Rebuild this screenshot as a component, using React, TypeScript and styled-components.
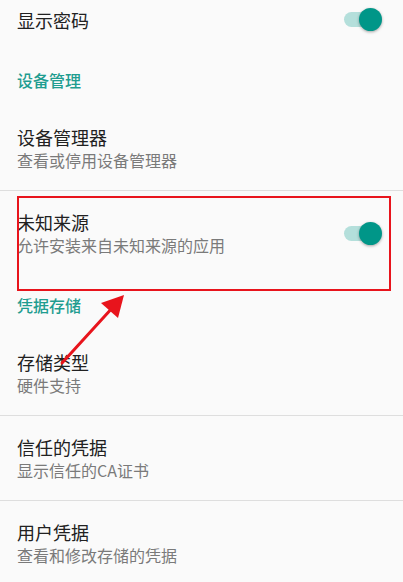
import React from "react";
import styled, { createGlobalStyle } from "styled-components";

const GlobalStyle = createGlobalStyle`
  html, body {
    margin: 0;
    padding: 0;
    background: #fafafa;
  }
  * {
    box-sizing: border-box;
  }
`;

function Switch() {
  return (
    <SwitchBox>
      <Track />
      <Thumb />
    </SwitchBox>
  );
}

function Item({
  title,
  summary,
  divider,
  toggle,
}: {
  title: string;
  summary: string;
  divider?: boolean;
  toggle?: boolean;
}) {
  return (
    <ItemRow $divider={divider}>
      <TextCol>
        <Title>{title}</Title>
        <Summary>{summary}</Summary>
      </TextCol>
      {toggle && <Switch />}
    </ItemRow>
  );
}

function App() {
  return (
    <>
      <GlobalStyle />
      <Page>
        <List>
          <SingleRow>
            <Title>显示密码</Title>
            <Switch />
          </SingleRow>

          <Category>设备管理</Category>
          <Item title="设备管理器" summary="查看或停用设备管理器" divider />
          <Item title="未知来源" summary="允许安装来自未知来源的应用" toggle />

          <Category>凭据存储</Category>
          <Item title="存储类型" summary="硬件支持" divider />
          <Item title="信任的凭据" summary="显示信任的CA证书" divider />
          <Item title="用户凭据" summary="查看和修改存储的凭据" />
        </List>

        <Highlight />
        <Arrow width="403" height="582" viewBox="0 0 403 582">
          <line x1="62" y1="363" x2="114" y2="306" stroke="#e8141c" strokeWidth="3" strokeLinecap="round" />
          <polygon points="124,295 118,318 101,303" fill="#e8141c" />
        </Arrow>
      </Page>
    </>
  );
}

const Page = styled.div`
  position: relative;
  width: 403px;
  height: 582px;
  overflow: hidden;
  background: #fafafa;
  font-family: "Noto Sans CJK SC", "Noto Sans", sans-serif;
`;

const List = styled.div`
  display: flex;
  flex-direction: column;
  margin-top: -12px;
`;

const SingleRow = styled.div`
  display: flex;
  align-items: center;
  justify-content: space-between;
  height: 63px;
  padding: 0 21px 0 17px;
`;

const Category = styled.div`
  height: 55px;
  padding: 18px 17px 0;
  font-size: 16px;
  line-height: 22px;
  font-weight: 500;
  color: #1f9d90;
`;

const ItemRow = styled.div<{ $divider?: boolean }>`
  display: flex;
  align-items: center;
  justify-content: space-between;
  height: 85px;
  padding: 0 21px 0 17px;
  border-bottom: 1px solid ${(p) => (p.$divider ? "#dedede" : "transparent")};
`;

const TextCol = styled.div`
  display: flex;
  flex-direction: column;
  padding-bottom: 1px;
`;

const Title = styled.div`
  font-size: 18px;
  line-height: 24px;
  color: #212121;
`;

const Summary = styled.div`
  font-size: 16px;
  line-height: 22px;
  color: #7a7a7a;
`;

const SwitchBox = styled.div`
  position: relative;
  width: 38px;
  height: 23px;
  flex-shrink: 0;
`;

const Track = styled.div`
  position: absolute;
  left: 0;
  top: 4px;
  width: 36px;
  height: 15px;
  border-radius: 8px;
  background: #b4dfdb;
`;

const Thumb = styled.div`
  position: absolute;
  right: 0;
  top: 0;
  width: 23px;
  height: 23px;
  border-radius: 50%;
  background: #009688;
  box-shadow: 0 1px 3px rgba(0, 0, 0, 0.35);
`;

const Highlight = styled.div`
  position: absolute;
  left: 17px;
  top: 196px;
  width: 374px;
  height: 95px;
  border: 2px solid #e8141c;
`;

const Arrow = styled.svg`
  position: absolute;
  left: 0;
  top: 0;
  pointer-events: none;
`;

export default App;
